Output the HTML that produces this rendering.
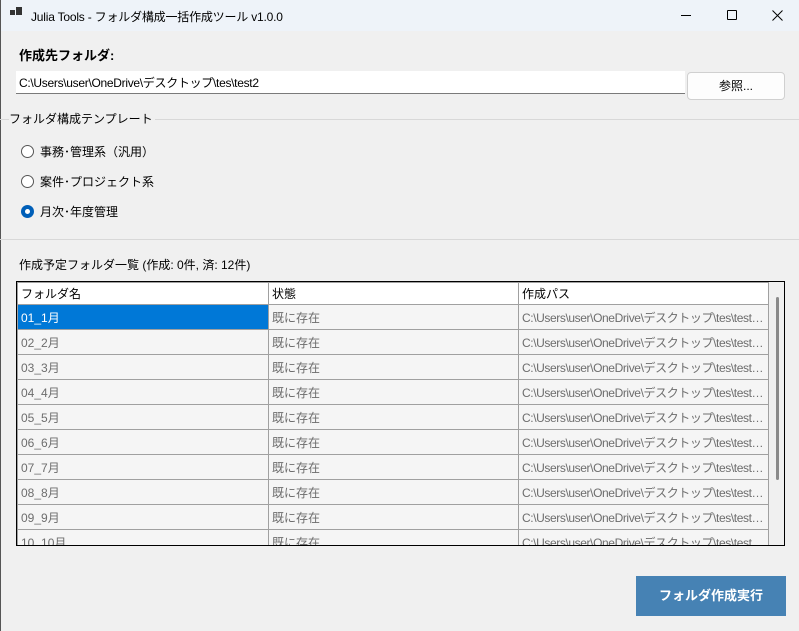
<!DOCTYPE html><html><head><meta charset="utf-8"><style>
*{margin:0;padding:0;box-sizing:border-box}
body{width:799px;height:631px;background:#f0f0f0;font-family:"Liberation Sans","Noto Sans CJK JP",sans-serif;font-size:12px;color:#000;position:relative;overflow:hidden}
.a{position:absolute;white-space:nowrap}
.title{left:0;top:0;width:799px;height:31px;background:#eef3f9}
table{border-collapse:collapse;table-layout:fixed}
td{height:25px;border:1px solid #a0a0a0;padding:0 3px;color:#6d6d6d;background:#f5f5f5;font-size:12px;overflow:hidden;white-space:nowrap;text-overflow:ellipsis}
td:nth-child(3){letter-spacing:-0.4px}
th{height:22px;border:1px solid #a0a0a0;padding:0 3px;text-align:left;font-weight:normal;background:#fff;font-size:12px}
</style></head><body>
<div class="a title"></div>
<div class="a" style="left:0;top:0;width:1px;height:631px;background:#555"></div>
<div class="a" style="left:10px;top:10px;width:5px;height:5px;background:#333"></div>
<div class="a" style="left:16px;top:7px;width:6px;height:8px;background:#333"></div>
<div class="a" style="left:31px;top:8px;font-size:12px;letter-spacing:-0.2px">Julia Tools - フォルダ構成一括作成ツール v1.0.0</div>
<div class="a" style="left:681px;top:15px;width:10px;height:1px;background:#000"></div>
<div class="a" style="left:727px;top:10px;width:10px;height:10px;border:1px solid #000;border-radius:1px"></div>
<svg class="a" style="left:772px;top:10px" width="11" height="11"><path d="M0.5 0.5L10.5 10.5M10.5 0.5L0.5 10.5" stroke="#000" stroke-width="1"/></svg>
<div class="a" style="left:19px;top:45px;font-weight:bold;font-size:13px">作成先フォルダ:</div>
<div class="a" style="left:16px;top:71px;width:669px;height:23px;background:#fff;border-bottom:1px solid #7a7a7a;padding:3px 3px;font-size:12px;letter-spacing:-0.3px">C:\Users\user\OneDrive\デスクトップ\tes\test2</div>
<div class="a" style="left:687px;top:72px;width:98px;height:28px;background:#fdfdfd;border:1px solid #d0d0d0;border-radius:4px;text-align:center;line-height:26px">参照...</div>
<div class="a" style="left:0;top:119px;width:799px;height:1px;background:#d8d8d8"></div>
<div class="a" style="left:9px;top:110px;background:#f0f0f0;padding-right:2px;font-size:12px">フォルダ構成テンプレート</div>
<div class="a" style="left:21px;top:145px;width:13px;height:13px;border:1px solid #555;border-radius:50%;background:#fff"></div>
<div class="a" style="left:40px;top:143px">事務･管理系（汎用）</div>
<div class="a" style="left:21px;top:175px;width:13px;height:13px;border:1px solid #555;border-radius:50%;background:#fff"></div>
<div class="a" style="left:40px;top:173px">案件･プロジェクト系</div>
<div class="a" style="left:21px;top:205px;width:13px;height:13px;border-radius:50%;background:#005fb8"></div>
<div class="a" style="left:25px;top:209px;width:5px;height:5px;border-radius:50%;background:#fff"></div>
<div class="a" style="left:40px;top:203px">月次･年度管理</div>
<div class="a" style="left:0;top:239px;width:799px;height:1px;background:#d8d8d8"></div>
<div class="a" style="left:19px;top:256px">作成予定フォルダ一覧 (作成: 0件, 済: 12件)</div>
<div class="a" style="left:16px;top:281px;width:769px;height:265px;border:1px solid #000;background:#f0f0f0;overflow:hidden">
<table style="width:751px">
<colgroup><col style="width:251px"><col style="width:250px"><col style="width:250px"></colgroup>
<tr><th>フォルダ名</th><th>状態</th><th>作成パス</th></tr>
<tr><td style="background:#0078d7;color:#fff">01_1月</td><td>既に存在</td><td>C:\Users\user\OneDrive\デスクトップ\tes\test2\01_1月</td></tr>
<tr><td>02_2月</td><td>既に存在</td><td>C:\Users\user\OneDrive\デスクトップ\tes\test2\02_2月</td></tr>
<tr><td>03_3月</td><td>既に存在</td><td>C:\Users\user\OneDrive\デスクトップ\tes\test2\03_3月</td></tr>
<tr><td>04_4月</td><td>既に存在</td><td>C:\Users\user\OneDrive\デスクトップ\tes\test2\04_4月</td></tr>
<tr><td>05_5月</td><td>既に存在</td><td>C:\Users\user\OneDrive\デスクトップ\tes\test2\05_5月</td></tr>
<tr><td>06_6月</td><td>既に存在</td><td>C:\Users\user\OneDrive\デスクトップ\tes\test2\06_6月</td></tr>
<tr><td>07_7月</td><td>既に存在</td><td>C:\Users\user\OneDrive\デスクトップ\tes\test2\07_7月</td></tr>
<tr><td>08_8月</td><td>既に存在</td><td>C:\Users\user\OneDrive\デスクトップ\tes\test2\08_8月</td></tr>
<tr><td>09_9月</td><td>既に存在</td><td>C:\Users\user\OneDrive\デスクトップ\tes\test2\09_9月</td></tr>
<tr><td>10_10月</td><td>既に存在</td><td>C:\Users\user\OneDrive\デスクトップ\tes\test2\10_10月</td></tr>
</table>
<div class="a" style="left:759px;top:15px;width:3px;height:183px;background:#8a8a8a;border-radius:2px"></div>
</div>
<div class="a" style="left:636px;top:576px;width:150px;height:40px;background:#4682b4;color:#fff;font-weight:bold;font-size:13px;text-align:center;line-height:40px">フォルダ作成実行</div>
</body></html>
